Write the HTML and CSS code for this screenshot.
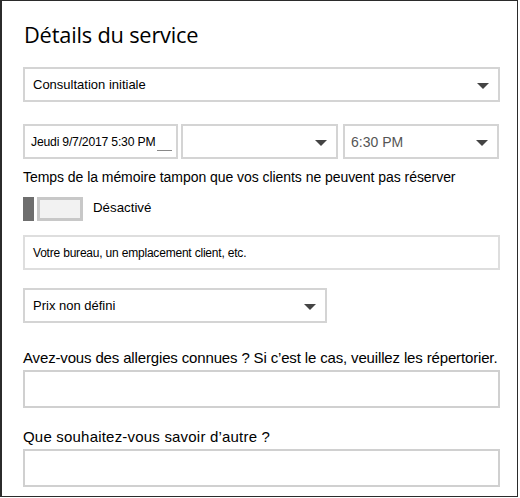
FILE: index.html
```html
<!DOCTYPE html>
<html lang="fr">
<head>
<meta charset="utf-8">
<link rel="stylesheet" href="styles.css">
</head>
<body>
<div class="frame">
  <h1 class="title">Détails du service</h1>
  <div class="field select wide mt-title"><span class="val">Consultation initiale</span><span class="arrow"></span></div>
  <div class="row mt-row">
    <div class="field date"><span class="val small">Jeudi 9/7/2017 5:30 PM</span><span class="cursor"></span></div>
    <div class="field mid"><span class="arrow"></span></div>
    <div class="field end"><span class="val gray">6:30 PM</span><span class="arrow"></span></div>
  </div>
  <div class="label small-label">Temps de la mémoire tampon que vos clients ne peuvent pas réserver</div>
  <div class="toggle-row">
    <span class="tog-knob"></span>
    <span class="tog-track"></span>
    <span class="tog-text">Désactivé</span>
  </div>
  <div class="field wide loc"><span class="val small loc-text">Votre bureau, un emplacement client, etc.</span></div>
  <div class="field select price"><span class="val">Prix non défini</span><span class="arrow"></span></div>
  <div class="label q q1">Avez-vous des allergies connues ? Si c’est le cas, veuillez les répertorier.</div>
  <div class="field wide area"></div>
  <div class="label q q2">Que souhaitez-vous savoir d’autre ?</div>
  <div class="field wide area"></div>
</div>
</body>
</html>
```
FILE: styles.css
```css
* { box-sizing: border-box; }
html, body { margin: 0; padding: 0; background: #fff; }
body { font-family: "Liberation Sans", Arial, sans-serif; color: #000; }
.frame {
  width: 518px;
  height: 497px;
  border: 1px solid #2b2b2b;
  border-left-width: 2px;
  padding: 0 17px 0 21px;
  display: flex;
  flex-direction: column;
  align-items: flex-start;
}
.title {
  margin: 19px 0 0 1px;
  font-family: "Open Sans", "Noto Sans", sans-serif;
  font-weight: 400;
  font-size: 21.8px;
  line-height: 30px;
  letter-spacing: -0.2px;
}
.field {
  border: 2px solid #d4d4d4;
  height: 35px;
  display: flex;
  align-items: center;
  position: relative;
  background: #fff;
}
.wide { width: 477px; }
.mt-title { margin-top: 17px; }
.val { font-size: 13px; padding-left: 8px; white-space: nowrap; }
.val.small { font-size: 12px; letter-spacing: -0.2px; }
.date .val.small { padding-left: 6px; font-size: 12.2px; }
.loc-text { font-size: 12.3px; letter-spacing: -0.1px; }
.val.gray { color: #555; font-size: 14px; padding-left: 6px; }
.arrow {
  position: absolute;
  right: 9px;
  top: 14px;
  width: 0; height: 0;
  border-left: 6px solid transparent;
  border-right: 6px solid transparent;
  border-top: 6px solid #444;
}
.row { display: flex; gap: 3px; }
.mt-row { margin-top: 22px; }
.date { width: 155px; }
.mid { width: 157px; }
.end { width: 156px; margin-left: 2px; }
.cursor {
  position: absolute;
  left: 132px;
  top: 24px;
  width: 15px;
  height: 1px;
  background: #888;
}
.label { white-space: nowrap; }
.small-label { font-size: 14px; margin-top: 10px; line-height: 17px; letter-spacing: -0.05px; }
.toggle-row { display: flex; align-items: center; margin-top: 11px; height: 24px; }
.tog-knob { width: 11px; height: 24px; background: #6e6e6e; }
.tog-track { width: 46px; height: 24px; border: 3px solid #c8c8c8; background: #f2f2f2; margin-left: 3px; }
.tog-text { font-size: 13.3px; margin-left: 10px; margin-top: -4px; }
.loc { margin-top: 14px; border-color: #dedede; height: 35px; }
.price { width: 304px; margin-top: 18px; }
.q { font-size: 15px; line-height: 18px; letter-spacing: -0.15px; }
.q1 { margin-top: 26px; }
.q2 { margin-top: 20px; letter-spacing: 0.2px; }
.area { height: 38px; margin-top: 3px; border-color: #d0d0d0; }
```
